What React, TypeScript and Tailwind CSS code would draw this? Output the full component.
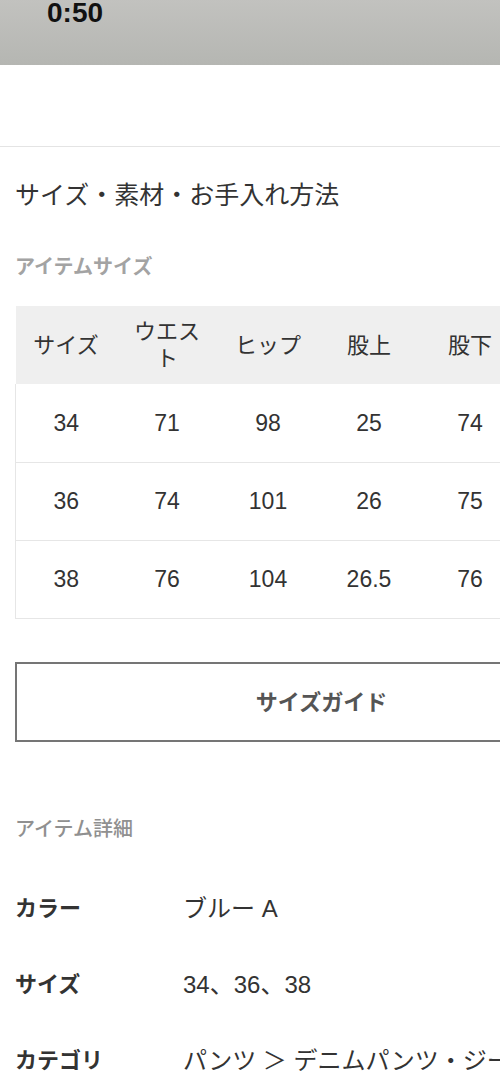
const sizeRows = [
  ['34', '71', '98', '25', '74', '17'],
  ['36', '74', '101', '26', '75', '18'],
  ['38', '76', '104', '26.5', '76', '19'],
];

const headers = ['サイズ', 'ウエスト', 'ヒップ', '股上', '股下', '裾幅'];

const details = [
  { label: 'カラー', value: 'ブルー A' },
  { label: 'サイズ', value: '34、36、38' },
  { label: 'カテゴリ', value: 'パンツ ＞ デニムパンツ・ジーンズ' },
];

const font = "font-['Liberation_Sans','Noto_Sans_CJK_JP',sans-serif]";

export default function App() {
  return (
    <div className={`w-[500px] h-[1080px] overflow-hidden bg-white text-[#333] ${font}`}>
      <div className="h-[66px] bg-gradient-to-b from-[#c2c2bf] to-[#b5b6b2] pl-[47px]">
        <div className="-mt-[1px] text-[28px] font-bold leading-none text-[#111]">0:50</div>
      </div>
      <div className="h-[82px] border-b border-[#e4e4e4] bg-white" />

      <div className="w-[642px] px-[15px]">
        <h2 className="pt-[30px] text-[25px] leading-[36px]">サイズ・素材・お手入れ方法</h2>

        <div className="mt-[40px] text-[20px] font-bold leading-[28px] text-[#a3a3a3]">アイテムサイズ</div>

        <table className="mt-[25px] w-[606px] table-fixed border-collapse">
          <thead>
            <tr className="h-[78px] bg-[#efefef]">
              {headers.map((h) => (
                <th key={h} className="w-[101px] px-[16px] text-[22px] font-normal leading-[27px] text-[#333]">
                  {h}
                </th>
              ))}
            </tr>
          </thead>
          <tbody>
            {sizeRows.map((row, i) => (
              <tr key={i} className="h-[78px] border-b border-[#e6e6e6]">
                {row.map((cell, j) => (
                  <td
                    key={j}
                    className={`text-center text-[23px] ${j === 0 ? 'border-l border-[#e6e6e6]' : ''}`}
                  >
                    {cell}
                  </td>
                ))}
              </tr>
            ))}
          </tbody>
        </table>

        <button className="mt-[43px] flex h-[80px] w-[613px] items-center justify-center border-2 border-[#757575] bg-white pt-[2px] text-[22px] font-bold text-[#555]">
          サイズガイド
        </button>

        <div className="mt-[73px] text-[20px] font-medium leading-[28px] text-[#909090]">アイテム詳細</div>

        <div className="mt-[28px] flex flex-col">
          {details.map((d) => (
            <div key={d.label} className="flex h-[76px] items-center whitespace-nowrap">
              <div className="w-[168px] text-[22px] font-bold">{d.label}</div>
              <div className="text-[24px]">{d.value}</div>
            </div>
          ))}
        </div>
      </div>
    </div>
  );
}
